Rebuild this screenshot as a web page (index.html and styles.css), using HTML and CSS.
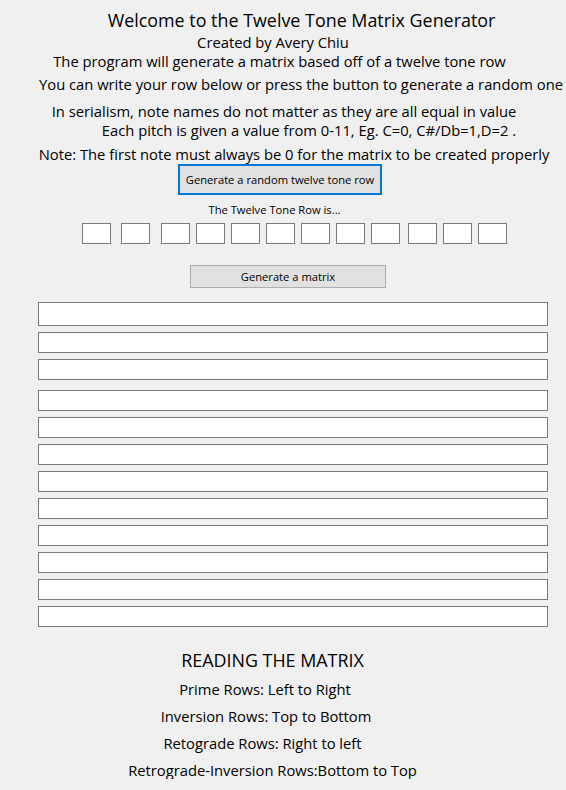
FILE: index.html
```html
<!DOCTYPE html>
<html lang="en">
<head>
<meta charset="utf-8">
<title>Twelve Tone Matrix Generator</title>
<link rel="stylesheet" href="styles.css">
</head>
<body>
<div class="app">
  <p class="line title l-title"><span>Welcome to the Twelve Tone Matrix Generator</span></p>
  <p class="line l-created"><span>Created by Avery Chiu</span></p>
  <p class="line l-program"><span>The program will generate a matrix based off of a twelve tone row</span></p>
  <p class="line l-write"><span>You can write your row below or press the button to generate a random one</span></p>
  <p class="line l-serial"><span>In serialism, note names do not matter as they are all equal in value</span></p>
  <p class="line l-each"><span>Each pitch is given a value from 0-11, Eg. C=0, C#/Db=1,D=2 .</span></p>
  <p class="line l-note"><span>Note: The first note must always be 0 for the matrix to be created properly</span></p>
  <button class="btn btn-random" type="button">Generate a random twelve tone row</button>
  <p class="line small l-label"><span>The Twelve Tone Row is...</span></p>
  <div class="tone-row">
    <input class="tone-box" type="text"><input class="tone-box" type="text"><input class="tone-box" type="text"><input class="tone-box" type="text"><input class="tone-box" type="text"><input class="tone-box" type="text"><input class="tone-box" type="text"><input class="tone-box" type="text"><input class="tone-box" type="text"><input class="tone-box" type="text"><input class="tone-box" type="text"><input class="tone-box" type="text">
  </div>
  <button class="btn btn-matrix" type="button">Generate a matrix</button>
  <div class="matrix">
    <input class="matrix-row" type="text"><input class="matrix-row" type="text"><input class="matrix-row" type="text"><input class="matrix-row" type="text"><input class="matrix-row" type="text"><input class="matrix-row" type="text"><input class="matrix-row" type="text"><input class="matrix-row" type="text"><input class="matrix-row" type="text"><input class="matrix-row" type="text"><input class="matrix-row" type="text"><input class="matrix-row" type="text">
  </div>
  <p class="line title l-reading"><span>READING THE MATRIX</span></p>
  <p class="line l-prime"><span>Prime Rows: Left to Right</span></p>
  <p class="line l-inv"><span>Inversion Rows: Top to Bottom</span></p>
  <p class="line l-retro"><span>Retograde Rows: Right to left</span></p>
  <p class="line l-ri"><span>Retrograde-Inversion Rows:Bottom to Top</span></p>
</div>
</body>
</html>
```

FILE: styles.css
```css
html, body {
  margin: 0;
  background: #f0f0f0;
}

body {
  font-family: "Open Sans", "Noto Sans", sans-serif;
  color: #000;
}

.app {
  display: flex;
  flex-direction: column;
  align-items: flex-start;
  padding-top: 10px;
}

.line {
  margin: 0;
  display: flex;
  justify-content: center;
  white-space: nowrap;
  height: 17px;
  line-height: 17px;
  font-size: 14.75px;
}

.title {
  font-size: 17.9px;
  height: 21px;
  line-height: 21px;
}

.small {
  font-size: 11.2px;
  height: 14px;
  line-height: 14px;
}

.l-title   { margin-left: 108px; width: 387px; }
.l-created { margin-left: 196px; width: 154px; margin-top: 3px; }
.l-program { margin-left: 52px;  width: 455px; margin-top: 2px; }
.l-write   { margin-left: 39px;  width: 524px; margin-top: 6px; }
.l-serial  { margin-left: 52px;  width: 464px; margin-top: 10px; }
.l-each    { margin-left: 95px;  width: 428px; margin-top: 2px; }
.l-note    { margin-left: 39px;  width: 510px; margin-top: 7px; }
.l-label   { margin-left: 209px; width: 131px; margin-top: 8px; }
.l-reading { margin-left: 180px; width: 185px; margin-top: 23px; }
.l-prime   { margin-left: 178px; width: 174px; margin-top: 10px; }
.l-inv     { margin-left: 161px; width: 210px; margin-top: 10px; }
.l-retro   { margin-left: 162px; width: 201px; margin-top: 10px; }
.l-ri      { margin-left: 128px; width: 289px; margin-top: 10px; }

.btn {
  box-sizing: border-box;
  margin: 0;
  padding: 0;
  display: flex;
  align-items: center;
  justify-content: center;
  white-space: nowrap;
  font-family: "Open Sans", "Noto Sans", sans-serif;
  font-size: 11.2px;
  color: #000;
  background: #e1e1e1;
  border: 1px solid #adadad;
  border-radius: 0;
}

.btn-random {
  margin-left: 178px;
  margin-top: 1px;
  width: 204px;
  height: 31px;
  border: 2px solid #0078d7;
}

.btn-matrix {
  margin-left: 190px;
  margin-top: 21px;
  width: 196px;
  height: 23px;
}

.tone-row {
  display: flex;
  gap: 6px;
  margin-left: 82px;
  margin-top: 6px;
}

.tone-box,
.matrix-row {
  box-sizing: border-box;
  display: block;
  margin: 0;
  padding: 0;
  border: 1px solid #7a7a7a;
  border-radius: 0;
  background: #fff;
  outline: none;
  -webkit-appearance: none;
  appearance: none;
}

.tone-box {
  width: 29px;
  height: 21px;
}

.tone-box:nth-child(2)  { margin-left: 4px; }
.tone-box:nth-child(3)  { margin-left: 5px; }
.tone-box:nth-child(10) { margin-left: 2px; }

.matrix {
  display: flex;
  flex-direction: column;
  gap: 6px;
  margin-left: 38px;
  margin-top: 14px;
}

.matrix-row {
  width: 510px;
  height: 21px;
}

.matrix-row:first-child { height: 24px; }
.matrix-row:nth-child(4) { margin-top: 4px; }
```
